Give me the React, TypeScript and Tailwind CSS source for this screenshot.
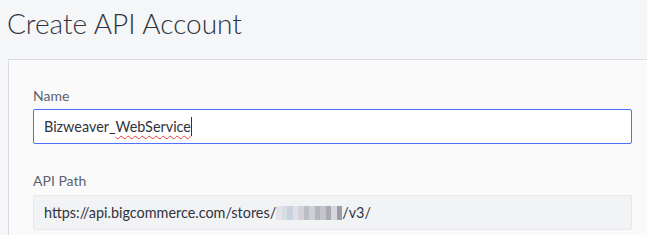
export default function App() {
  const blur = [
    "#e4e4e8", "#d8dde6", "#c9d3e0", "#e0e0e4", "#d2d2d8", "#bdbdc6", "#cfcfd6", "#b5b5be", "#c4c4cc", "#a9a9b4", "#d6d6dc", "#9c9ca8",
  ];
  return (
    <div className="w-[647px] h-[235px] overflow-hidden bg-[#f5f6f8] font-['Lato',sans-serif]">
      <h1 className="pl-[7px] pt-[3px] h-[59px] text-[28px] font-light text-[#313440] leading-[40px]">Create API Account</h1>
      <div className="ml-[8px] w-[700px] h-[200px] bg-[#fafafa] border border-[#d9dce3] pl-[24px] pt-[26px]">
        <div className="text-[14px] text-[#5e6270] leading-[20px] mb-[3px]">Name</div>
        <div className="w-[599px] h-[35px] bg-white border border-[#4b71fc] rounded-[2px] flex items-center pl-[10px] text-[14.4px] text-[#313440]">
          <span>Bizweaver_</span>
          <span className="underline decoration-wavy decoration-[#e53935] decoration-1 underline-offset-[3px]">WebService</span>
          <span className="w-px h-[19px] bg-[#313440]" />
        </div>
        <div className="text-[14px] text-[#5e6270] leading-[20px] mt-[27px] mb-[4px]">API Path</div>
        <div className="w-[599px] h-[35px] bg-[#f2f3f4] border border-[#e6e8eb] rounded-[2px] flex items-center pl-[10px] text-[14.4px] text-[#313440]">
          <span>https://api.bigcommerce.com/stores/</span>
          <span className="flex h-[14px] w-[66px]">
            {blur.map((c, i) => (
              <span key={i} className="flex-1 h-full" style={{ background: c }} />
            ))}
          </span>
          <span>/v3/</span>
        </div>
      </div>
    </div>
  );
}
